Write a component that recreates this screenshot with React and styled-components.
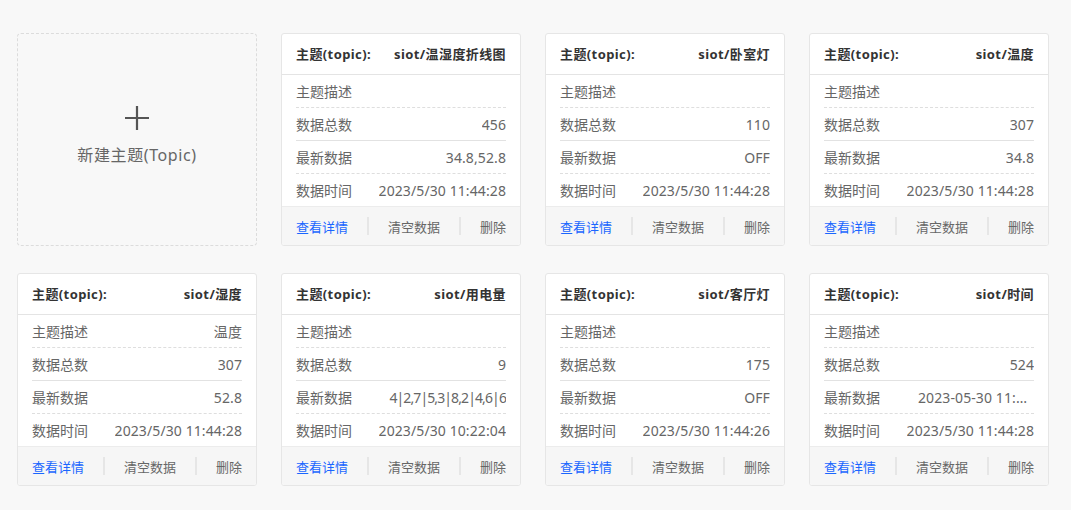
import React from "react";
import styled, { createGlobalStyle } from "styled-components";

const Global = createGlobalStyle`
  html, body { margin: 0; padding: 0; background: #f8f8f8; }
  body { font-family: "Noto Sans", "Noto Sans CJK SC", sans-serif; }
  * { box-sizing: border-box; }
`;

const FONT = `"Noto Sans", "Noto Sans CJK SC", sans-serif`;

const Page = styled.div`
  width: 1071px;
  height: 510px;
  background: #f8f8f8;
  padding: 33px 17px;
`;

const Grid = styled.div`
  display: grid;
  grid-template-columns: repeat(4, 240px);
  column-gap: 24px;
  row-gap: 27px;
`;

const NewCard = styled.div`
  height: 213px;
  border: 1px dashed #dcdcdc;
  border-radius: 4px;
  display: flex;
  flex-direction: column;
  align-items: center;
  justify-content: center;
  gap: 13px;
  padding-bottom: 8px;
  color: #666;
  font-family: ${FONT};
  font-size: 16px;
  cursor: pointer;
`;

const NewLabel = styled.span`
  letter-spacing: 0.6px;
  line-height: 22px;
`;

const Plus = styled.svg`
  width: 26px;
  height: 26px;
`;

const Card = styled.div`
  height: 213px;
  background: #fff;
  border: 1px solid #e6e6e6;
  border-radius: 3px;
  display: flex;
  flex-direction: column;
  overflow: hidden;
`;

const Header = styled.div`
  height: 41px;
  flex: none;
  display: flex;
  align-items: center;
  justify-content: space-between;
  padding: 0 14px 2px;
  border-bottom: 1px solid #e4e4e4;
  font-weight: 700;
  font-size: 13px;
  letter-spacing: 0.4px;
  color: #333;
  font-family: ${FONT};
`;

const Body = styled.div`
  padding: 0 14px;
  flex: 1;
`;

const Row = styled.div`
  height: ${(p) => (p.$last ? "32px" : "33px")};
  display: flex;
  align-items: center;
  justify-content: space-between;
  gap: 12px;
  font-size: 14px;
  color: #666;
  font-family: ${FONT};
  border-bottom: ${(p) =>
    p.$last ? "none" : p.$dashed ? "1px dashed #dedede" : "1px solid #e2e2e2"};
`;

const Label = styled.span`
  flex: none;
`;

const Value = styled.span`
  white-space: nowrap;
  overflow: hidden;
  text-overflow: ellipsis;
  max-width: ${(p) => (p.$clip ? "116px" : "none")};
  letter-spacing: ${(p) => (p.$tight ? "-0.9px" : "0.1px")};
`;

const Footer = styled.div`
  height: 39px;
  flex: none;
  background: #f6f6f6;
  border-top: 1px solid #ececec;
  display: flex;
  align-items: center;
  justify-content: space-between;
  padding: 0 14px;
  font-size: 13px;
  font-family: ${FONT};
`;

const Action = styled.span`
  color: ${(p) => (p.$primary ? "#1a66ff" : "#666")};
  cursor: pointer;
`;

const Sep = styled.span`
  width: 2px;
  height: 18px;
  background: #e6e6e6;
`;

const topics = [
  { name: "siot/温湿度折线图", desc: "", count: "456", latest: "34.8,52.8", time: "2023/5/30 11:44:28" },
  { name: "siot/卧室灯", desc: "", count: "110", latest: "OFF", time: "2023/5/30 11:44:28" },
  { name: "siot/温度", desc: "", count: "307", latest: "34.8", time: "2023/5/30 11:44:28" },
  { name: "siot/湿度", desc: "温度", count: "307", latest: "52.8", time: "2023/5/30 11:44:28" },
  { name: "siot/用电量", desc: "", count: "9", latest: "4|2,7|5,3|8,2|4,6|6", time: "2023/5/30 10:22:04", tight: true },
  { name: "siot/客厅灯", desc: "", count: "175", latest: "OFF", time: "2023/5/30 11:44:26" },
  { name: "siot/时间", desc: "", count: "524", latest: "2023-05-30 11:44:28", time: "2023/5/30 11:44:28", clip: true },
];

function TopicCard({ t }) {
  return (
    <Card>
      <Header>
        <span>主题(topic):</span>
        <span>{t.name}</span>
      </Header>
      <Body>
        <Row $dashed>
          <Label>主题描述</Label>
          <Value>{t.desc}</Value>
        </Row>
        <Row>
          <Label>数据总数</Label>
          <Value>{t.count}</Value>
        </Row>
        <Row $dashed>
          <Label>最新数据</Label>
          <Value $clip={t.clip} $tight={t.tight}>{t.latest}</Value>
        </Row>
        <Row $last>
          <Label>数据时间</Label>
          <Value>{t.time}</Value>
        </Row>
      </Body>
      <Footer>
        <Action $primary>查看详情</Action>
        <Sep />
        <Action>清空数据</Action>
        <Sep />
        <Action>删除</Action>
      </Footer>
    </Card>
  );
}

export default function App() {
  return (
    <Page>
      <Global />
      <Grid>
        <NewCard>
          <Plus viewBox="0 0 26 26">
            <path d="M13 1v24M1 13h24" stroke="#555" strokeWidth="2.2" fill="none" />
          </Plus>
          <NewLabel>新建主题(Topic)</NewLabel>
        </NewCard>
        {topics.map((t) => (
          <TopicCard key={t.name} t={t} />
        ))}
      </Grid>
    </Page>
  );
}
